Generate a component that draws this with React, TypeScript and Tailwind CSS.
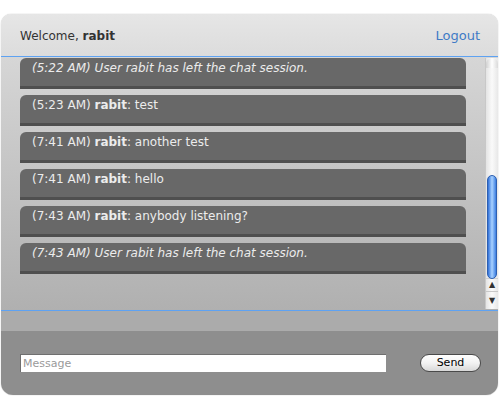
import React from "react";

type Msg = { time: string; user?: string; text: string; system?: boolean };

const messages: Msg[] = [
  { time: "5:22 AM", text: "User rabit has left the chat session.", system: true },
  { time: "5:23 AM", user: "rabit", text: "test" },
  { time: "7:41 AM", user: "rabit", text: "another test" },
  { time: "7:41 AM", user: "rabit", text: "hello" },
  { time: "7:43 AM", user: "rabit", text: "anybody listening?" },
  { time: "7:43 AM", text: "User rabit has left the chat session.", system: true },
];

function Bubble({ m }: { m: Msg }) {
  return (
    <div className="h-[31px] bg-[#686868] border-b-[3px] border-[#4f4f4f] rounded-t-[6px] pl-[12px] pt-[2px] text-[12px] leading-[16px] text-[#ececec]">
      {m.system ? (
        <span className="italic">
          ({m.time}) {m.text}
        </span>
      ) : (
        <span>
          ({m.time}) <b>{m.user}</b>: {m.text}
        </span>
      )}
    </div>
  );
}

function Scrollbar() {
  return (
    <div className="w-[13px] h-full flex flex-col bg-gradient-to-r from-[#e4e4e4] via-[#fafafa] to-[#e8e8e8] border-l border-[#c8c8c8]">
      <div className="flex-1 relative">
        <div className="absolute top-0 left-0 right-0 h-[10px] rounded-t-full bg-gradient-to-r from-[#d0d0d0] via-white to-[#dadada]" />
        <div className="absolute top-[117px] left-[1px] right-[1px] h-[104px] rounded-full bg-gradient-to-r from-[#2f6fd8] via-[#a9d2ff] to-[#3b7de0] border border-[#2d5fb0]" />
      </div>
      <div className="h-[13px] flex items-center justify-center border-t border-[#d0d0d0] text-[8px] text-[#333]">▲</div>
      <div className="h-[18px] flex items-center justify-center border-t border-[#c8c8c8] text-[8px] text-[#333]">▼</div>
    </div>
  );
}

export default function App() {
  return (
    <div className="w-[500px] h-[408px] bg-white pt-[14px] pl-[1px]" style={{ fontFamily: '"DejaVu Sans", "Noto Sans", sans-serif' }}>
      <div className="w-[497px] h-[381px] flex flex-col rounded-t-[10px] rounded-b-[12px] overflow-hidden shadow-[0_0_1px_rgba(0,0,0,0.4)]">
        {/* header */}
        <div className="h-[43px] shrink-0 flex items-center justify-between pl-[19px] pr-[18px] bg-gradient-to-b from-[#e6e6e6] to-[#dcdcdc] border-b border-[#5ea2f2]">
          <div className="text-[12px] text-[#333] pt-[1px]">
            Welcome, <b>rabit</b>
          </div>
          <div className="text-[13px] text-[#3f7bc6] pt-[1px]">Logout</div>
        </div>

        {/* messages */}
        <div className="h-[254px] shrink-0 flex bg-gradient-to-b from-[#d6d6d6] to-[#b0b0b0] border-b border-[#5ea2f2]">
          <div className="flex-1 overflow-hidden pl-[19px] pr-[19px] pt-[1px] flex flex-col gap-[6px]">
            {messages.map((m, i) => (
              <Bubble key={i} m={m} />
            ))}
          </div>
          <div className="pt-[1px] pb-[1px]">
            <Scrollbar />
          </div>
        </div>

        <div className="h-[20px] shrink-0 bg-[#ababab]" />

        {/* footer */}
        <div className="flex-1 bg-[#8e8e8e] flex items-start pt-[23px] pl-[19px] pr-[17px]">
          <input
            placeholder="Message"
            className="w-[366px] h-[18px] bg-white border-t border-l border-[#6f6f6f] px-[2px] text-[11px] text-[#333] placeholder:text-[#9a9a9a] outline-none"
          />
          <div className="flex-1" />
          <button className="w-[61px] h-[18px] rounded-full bg-gradient-to-b from-white via-[#f2f2f2] to-[#d8d8d8] border border-[#4a4a4a] text-[11px] text-black leading-[16px]">
            Send
          </button>
        </div>
      </div>
    </div>
  );
}
